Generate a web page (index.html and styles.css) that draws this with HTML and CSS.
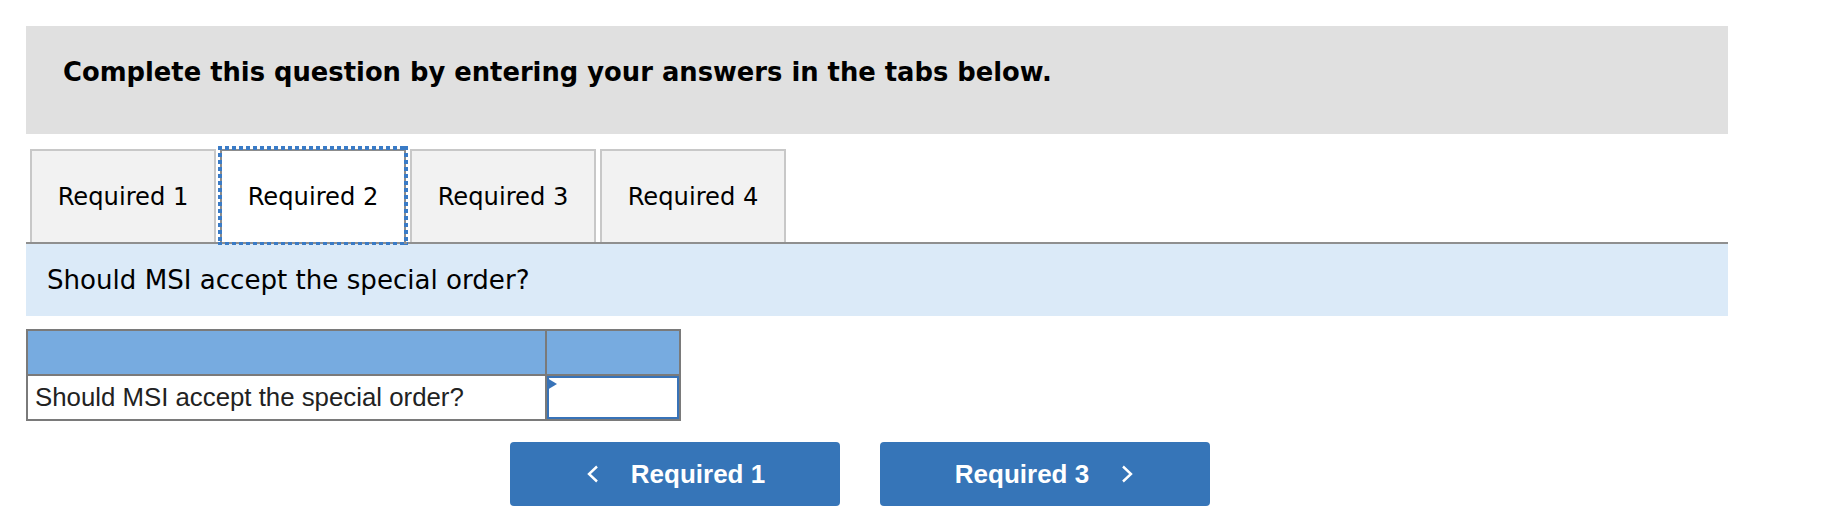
FILE: index.html
```html
<!DOCTYPE html>
<html lang="en">
<head>
<meta charset="utf-8">
<title>Required 2</title>
<link rel="stylesheet" href="styles.css">
</head>
<body>
<div class="page">
  <div class="prompt">
    <h2 class="prompt-text">Complete this question by entering your answers in the tabs below.</h2>
  </div>

  <div class="tabs">
    <div class="tab">Required 1</div>
    <div class="tab active">Required 2</div>
    <div class="tab">Required 3</div>
    <div class="tab">Required 4</div>
  </div>

  <div class="question">Should MSI accept the special order?</div>

  <div class="answer">
    <div class="cell head"></div>
    <div class="cell head"></div>
    <div class="cell label">Should MSI accept the special order?</div>
    <div class="cell field"><div class="input"></div></div>
  </div>

  <div class="nav">
    <button class="btn">
      <svg class="chev" width="14" height="18" viewBox="0 0 14 18"><path d="M12 1.5 L4 9 L12 16.5" fill="none" stroke="#fff" stroke-width="2.4"/></svg>
      <span>Required 1</span>
    </button>
    <button class="btn">
      <span>Required 3</span>
      <svg class="chev" width="14" height="18" viewBox="0 0 14 18"><path d="M2 1.5 L10 9 L2 16.5" fill="none" stroke="#fff" stroke-width="2.4"/></svg>
    </button>
  </div>
</div>
</body>
</html>
```

FILE: styles.css
```css
html, body {
  margin: 0;
  padding: 0;
  background: #ffffff;
}

.page {
  padding: 26px 0 0 26px;
  width: 1702px;
}

.prompt {
  background: #e0e0e0;
  height: 108px;
  box-sizing: border-box;
  padding: 31px 37px 0;
}

.prompt-text {
  margin: 0;
  font-family: "DejaVu Sans", Verdana, sans-serif;
  font-weight: bold;
  font-size: 25.8px;
  line-height: 30px;
  color: #000;
}

.tabs {
  display: flex;
  gap: 4px;
  margin: 15px 0 0 4px;
}

.tab {
  width: 186px;
  height: 93px;
  box-sizing: border-box;
  border: 2px solid #c8c8c8;
  border-bottom: none;
  background: #f2f2f2;
  display: flex;
  align-items: center;
  justify-content: center;
  padding-top: 1px;
  font-family: "DejaVu Sans", Verdana, sans-serif;
  font-size: 24.2px;
  color: #000;
}

.tab.active {
  background: #ffffff;
  border-color: #8c8c8c;
  position: relative;
}

.tab.active::after {
  content: "";
  position: absolute;
  left: -4px;
  right: -4px;
  top: -5px;
  bottom: -3px;
  background:
    repeating-linear-gradient(90deg, #3a7bc6 0 4px, transparent 4px 7px) top left / 100% 4px no-repeat,
    repeating-linear-gradient(90deg, #3a7bc6 0 4px, transparent 4px 7px) bottom left / 100% 3px no-repeat,
    repeating-linear-gradient(180deg, #3a7bc6 0 4px, transparent 4px 7px) top left / 4px 100% no-repeat,
    repeating-linear-gradient(180deg, #3a7bc6 0 4px, transparent 4px 7px) top right / 4px 100% no-repeat;
}

.question {
  border-top: 2px solid #8f8f8f;
  background: #dbeaf8;
  height: 72px;
  display: flex;
  align-items: center;
  padding-left: 21px;
  font-family: "DejaVu Sans", Verdana, sans-serif;
  font-size: 26.1px;
  color: #000;
}

.answer {
  display: grid;
  grid-template-columns: 517px 132px;
  grid-template-rows: 43px 43px;
  gap: 2px;
  width: max-content;
  border: 2px solid #7a7a7a;
  background: #7a7a7a;
  margin-top: 13px;
}

.cell {
  background: #ffffff;
}

.cell.head {
  background: #77abe0;
}

.cell.label {
  display: flex;
  align-items: center;
  padding-left: 7px;
  font-family: "Liberation Sans", Arial, sans-serif;
  font-size: 25.8px;
  color: #222;
}

.cell.field {
  display: flex;
}

.input {
  flex: 1;
  border: 2px solid #3873b8;
  background: #fff;
  position: relative;
}

.input::before {
  content: "";
  position: absolute;
  left: -2px;
  top: 0;
  border-left: 10px solid #3873b8;
  border-top: 6px solid transparent;
  border-bottom: 6px solid transparent;
}

.nav {
  display: flex;
  gap: 40px;
  margin-top: 21px;
  padding-left: 484px;
}

.btn {
  width: 330px;
  height: 64px;
  border: none;
  border-radius: 4px;
  background: #3675b8;
  color: #fff;
  display: flex;
  align-items: center;
  justify-content: center;
  gap: 32px;
  font-family: "Liberation Sans", Arial, sans-serif;
  font-weight: bold;
  font-size: 26px;
  padding: 0;
}

.chev {
  display: block;
}
```
